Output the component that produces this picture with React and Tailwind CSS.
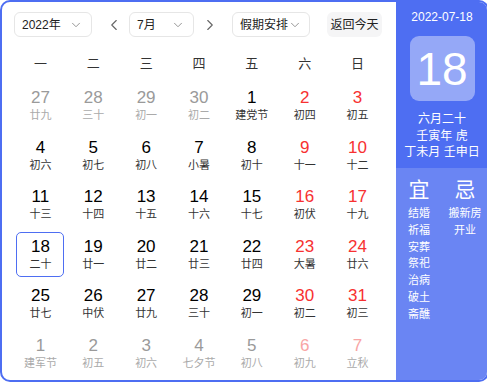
import React from 'react';
import { ChevronDown, ChevronLeft, ChevronRight } from 'lucide-react';

const weekDays = ['一', '二', '三', '四', '五', '六', '日'];

// n: normal, s: selected, r: weekend red, o: other month, or: other month weekend
const days = [
  ['27', '廿九', 'o'], ['28', '三十', 'o'], ['29', '初一', 'o'], ['30', '初二', 'o'], ['1', '建党节', 'n'], ['2', '初四', 'r'], ['3', '初五', 'r'],
  ['4', '初六', 'n'], ['5', '初七', 'n'], ['6', '初八', 'n'], ['7', '小暑', 'n'], ['8', '初十', 'n'], ['9', '十一', 'r'], ['10', '十二', 'r'],
  ['11', '十三', 'n'], ['12', '十四', 'n'], ['13', '十五', 'n'], ['14', '十六', 'n'], ['15', '十七', 'n'], ['16', '初伏', 'r'], ['17', '十九', 'r'],
  ['18', '二十', 's'], ['19', '廿一', 'n'], ['20', '廿二', 'n'], ['21', '廿三', 'n'], ['22', '廿四', 'n'], ['23', '大暑', 'r'], ['24', '廿六', 'r'],
  ['25', '廿七', 'n'], ['26', '中伏', 'n'], ['27', '廿九', 'n'], ['28', '三十', 'n'], ['29', '初一', 'n'], ['30', '初二', 'r'], ['31', '初三', 'r'],
  ['1', '建军节', 'o'], ['2', '初五', 'o'], ['3', '初六', 'o'], ['4', '七夕节', 'o'], ['5', '初八', 'o'], ['6', '初九', 'or'], ['7', '立秋', 'or'],
];

const numColor = {
  n: 'text-[#000]',
  s: 'text-[#000]',
  r: 'text-[#f73131]',
  o: 'text-[#9a9a9a]',
  or: 'text-[#f8a5a5]',
};
const lunarColor = {
  n: 'text-[#333]',
  s: 'text-[#333]',
  r: 'text-[#333]',
  o: 'text-[#aaa]',
  or: 'text-[#aaa]',
};

const yi = ['结婚', '祈福', '安葬', '祭祀', '治病', '破土', '斋醮'];
const ji = ['搬新房', '开业'];

function Select({ label, width }) {
  return (
    <div className={`flex items-center justify-between h-[25px] ${width} pl-[7px] pr-[8px] border border-[#e6e6e6] rounded-[6px] text-[12px] text-[#222] whitespace-nowrap`}>
      <span>{label}</span>
      <ChevronDown size={14} strokeWidth={1.5} className="text-[#888] shrink-0" />
    </div>
  );
}

export default function App() {
  return (
    <div className="w-[489px] h-[382px] overflow-hidden" style={{ fontFamily: '"Liberation Sans", "Noto Sans CJK SC", sans-serif' }}>
      <div className="flex w-[489px] h-[382px] border-2 border-[#4e6ef2] rounded-[10px] overflow-hidden bg-white">
        {/* left calendar */}
        <div className="w-[394px] shrink-0 pl-[12px] pt-[10px]">
          <div className="flex items-center h-[25px]">
            <Select label="2022年" width="w-[78px]" />
            <ChevronLeft size={18} strokeWidth={1.5} className="ml-[13px] text-[#666]" />
            <div className="ml-[6px]">
              <Select label="7月" width="w-[65px]" />
            </div>
            <ChevronRight size={18} strokeWidth={1.5} className="ml-[7px] text-[#666]" />
            <div className="ml-[13px]">
              <Select label="假期安排" width="w-[78px]" />
            </div>
            <div className="ml-[17px] h-[25px] w-[55px] flex items-center justify-center rounded-[6px] bg-[#f5f5f6] text-[12px] text-[#222] whitespace-nowrap">
              返回今天
            </div>
          </div>

          <div className="grid grid-cols-7 w-[370px] mt-[18px] text-[13px] text-[#333]">
            {weekDays.map((d) => (
              <div key={d} className="h-[18px] flex items-center justify-center">{d}</div>
            ))}
          </div>

          <div className="grid grid-cols-7 w-[370px] mt-[10px] gap-y-[4.6px]">
            {days.map(([n, l, t], i) => (
              <div key={i} className="flex justify-center">
                <div
                  className={`w-[48px] h-[45px] flex flex-col items-center justify-center rounded-[5px] ${
                    t === 's' ? 'border-[1.5px] border-[#4e6ef2]' : ''
                  }`}
                >
                  <span className={`text-[17px] leading-[18px] ${numColor[t]}`}>{n}</span>
                  <span className={`text-[11px] leading-[14px] mt-[1px] ${lunarColor[t]}`}>{l}</span>
                </div>
              </div>
            ))}
          </div>
        </div>

        {/* right panel */}
        <div className="flex-1 flex flex-col text-white">
          <div className="h-[166px] bg-[#4e6ef2] flex flex-col items-center pt-[7px]">
            <div className="text-[12px] leading-[16px]">2022-07-18</div>
            <div className="mt-[11px] w-[65px] h-[65px] rounded-[9px] bg-[#95a8f7] flex items-center justify-center text-[46px] leading-none">
              18
            </div>
            <div className="mt-[10px] text-[12px] leading-[16.5px] text-center">
              <div>六月二十</div>
              <div>壬寅年 虎</div>
              <div>丁未月 壬申日</div>
            </div>
          </div>
          <div className="flex-1 bg-[#6a85f3] flex pt-[10px]">
            <div className="w-[46px] flex flex-col items-center">
              <div className="text-[21px] leading-[24px]">宜</div>
              <div className="mt-[3px] text-[11px] leading-[16.8px] text-center">
                {yi.map((x) => (
                  <div key={x}>{x}</div>
                ))}
              </div>
            </div>
            <div className="w-[46px] flex flex-col items-center">
              <div className="text-[21px] leading-[24px]">忌</div>
              <div className="mt-[3px] text-[11px] leading-[16.8px] text-center">
                {ji.map((x) => (
                  <div key={x}>{x}</div>
                ))}
              </div>
            </div>
          </div>
        </div>
      </div>
    </div>
  );
}
